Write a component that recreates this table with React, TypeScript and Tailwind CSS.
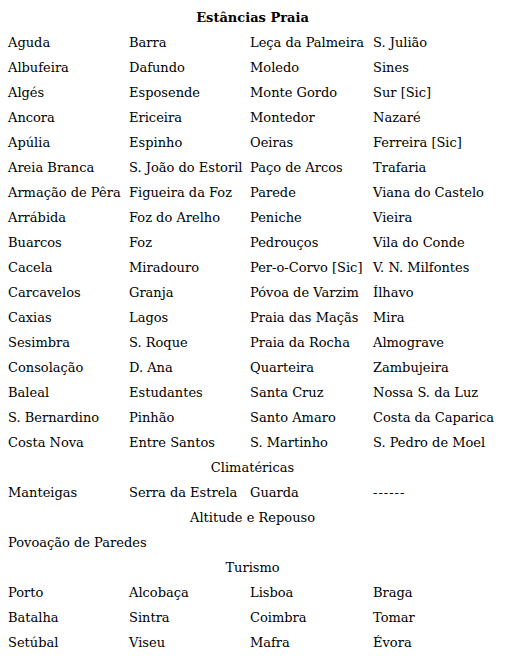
const praia: string[][] = [
  ["Aguda", "Barra", "Leça da Palmeira", "S. Julião"],
  ["Albufeira", "Dafundo", "Moledo", "Sines"],
  ["Algés", "Esposende", "Monte Gordo", "Sur [Sic]"],
  ["Ancora", "Ericeira", "Montedor", "Nazaré"],
  ["Apúlia", "Espinho", "Oeiras", "Ferreira [Sic]"],
  ["Areia Branca", "S. João do Estoril", "Paço de Arcos", "Trafaria"],
  ["Armação de Pêra", "Figueira da Foz", "Parede", "Viana do Castelo"],
  ["Arrábida", "Foz do Arelho", "Peniche", "Vieira"],
  ["Buarcos", "Foz", "Pedrouços", "Vila do Conde"],
  ["Cacela", "Miradouro", "Per-o-Corvo [Sic]", "V. N. Milfontes"],
  ["Carcavelos", "Granja", "Póvoa de Varzim", "Ílhavo"],
  ["Caxias", "Lagos", "Praia das Maçãs", "Mira"],
  ["Sesimbra", "S. Roque", "Praia da Rocha", "Almograve"],
  ["Consolação", "D. Ana", "Quarteira", "Zambujeira"],
  ["Baleal", "Estudantes", "Santa Cruz", "Nossa S. da Luz"],
  ["S. Bernardino", "Pinhão", "Santo Amaro", "Costa da Caparica"],
  ["Costa Nova", "Entre Santos", "S. Martinho", "S. Pedro de Moel"],
];

const turismo: string[][] = [
  ["Porto", "Alcobaça", "Lisboa", "Braga"],
  ["Batalha", "Sintra", "Coimbra", "Tomar"],
  ["Setúbal", "Viseu", "Mafra", "Évora"],
];

function Row({ cells }: { cells: string[] }) {
  return (
    <div className="grid grid-cols-[121px_121px_123px_1fr] h-[25px] items-center">
      {cells.map((c, i) => (
        <div key={i} className={`whitespace-nowrap ${c === "------" ? "tracking-[1px]" : ""}`}>
          {c}
        </div>
      ))}
    </div>
  );
}

function Heading({ children, bold }: { children: string; bold?: boolean }) {
  return (
    <div className={`h-[25px] flex items-center justify-center ${bold ? "font-bold" : ""}`}>
      {children}
    </div>
  );
}

export default function App() {
  return (
    <div className="bg-white text-black text-[13px] font-['DejaVu_Serif',serif] pt-[5px] pl-2 pr-2 min-h-[658px]">
      <Heading bold>Estâncias Praia</Heading>
      {praia.map((r, i) => (
        <Row key={i} cells={r} />
      ))}
      <Heading>Climatéricas</Heading>
      <Row cells={["Manteigas", "Serra da Estrela", "Guarda", "------"]} />
      <Heading>Altitude e Repouso</Heading>
      <Row cells={["Povoação de Paredes", "", "", ""]} />
      <Heading>Turismo</Heading>
      {turismo.map((r, i) => (
        <Row key={i} cells={r} />
      ))}
    </div>
  );
}
